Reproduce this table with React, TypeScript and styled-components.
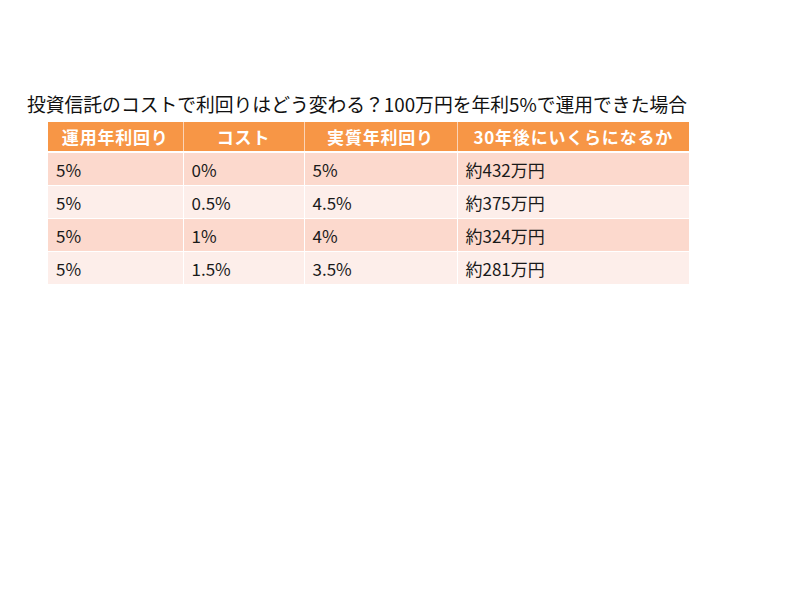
import React from "react";
import styled, { createGlobalStyle } from "styled-components";

const GlobalStyle = createGlobalStyle`
  html, body {
    margin: 0;
    padding: 0;
    background: #ffffff;
  }
  body {
    font-family: "Noto Sans CJK JP", "Noto Sans", sans-serif;
  }
`;

const Page = styled.div`
  width: 800px;
  height: 600px;
  box-sizing: border-box;
  padding: 91px 0 0 27px;
  display: flex;
  flex-direction: column;
  align-items: flex-start;
`;

const Title = styled.h1`
  margin: 0 0 5px 0;
  font-size: 18.8px;
  line-height: 26px;
  font-weight: 400;
  color: #111111;
  white-space: nowrap;
`;

const Table = styled.table`
  margin-left: 21px;
  border-collapse: collapse;
  table-layout: fixed;
  width: 641px;
`;

const HeadCell = styled.th`
  background: #f79646;
  color: #ffffff;
  font-size: 17px;
  font-weight: 700;
  letter-spacing: 0.8px;
  text-align: center;
  height: 29px;
  padding: 0;
  border-right: 1px solid #fbd3b6;
  border-bottom: 2px solid #ffffff;
  &:last-child {
    border-right: none;
  }
`;

const Row = styled.tr<{ $band: boolean }>`
  background: ${(p) => (p.$band ? "#fcd9cd" : "#fdeeea")};
  border-bottom: 1px solid #ffffff;
  &:last-child {
    border-bottom: none;
  }
`;

const Cell = styled.td`
  height: 32px;
  padding: 0 0 0 8px;
  font-size: 17px;
  color: #1a1a1a;
  text-align: left;
  border-right: 1px solid #ffffff;
  &:last-child {
    border-right: none;
  }
`;

const headers = ["運用年利回り", "コスト", "実質年利回り", "30年後にいくらになるか"];
const widths = [135, 121, 153, 232];
const rows = [
  ["5%", "0%", "5%", "約432万円"],
  ["5%", "0.5%", "4.5%", "約375万円"],
  ["5%", "1%", "4%", "約324万円"],
  ["5%", "1.5%", "3.5%", "約281万円"],
];

export default function App() {
  return (
    <>
      <GlobalStyle />
      <Page>
        <Title>投資信託のコストで利回りはどう変わる？100万円を年利5%で運用できた場合</Title>
        <Table>
          <colgroup>
            {widths.map((w, i) => (
              <col key={i} style={{ width: w }} />
            ))}
          </colgroup>
          <thead>
            <tr>
              {headers.map((h) => (
                <HeadCell key={h}>{h}</HeadCell>
              ))}
            </tr>
          </thead>
          <tbody>
            {rows.map((r, i) => (
              <Row key={i} $band={i % 2 === 0}>
                {r.map((c, j) => (
                  <Cell key={j}>{c}</Cell>
                ))}
              </Row>
            ))}
          </tbody>
        </Table>
      </Page>
    </>
  );
}
